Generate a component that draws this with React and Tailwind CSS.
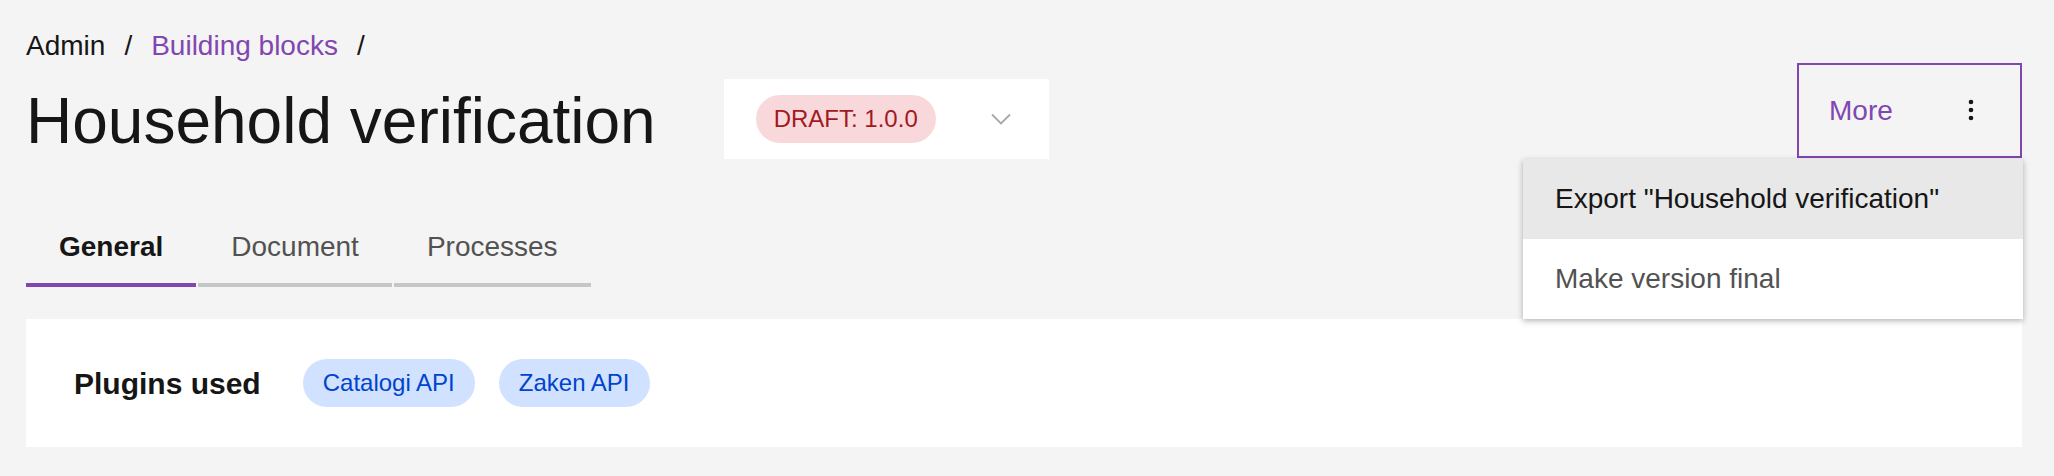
import { useState } from 'react';

const tabs = ['General', 'Document', 'Processes'];
const plugins = ['Catalogi API', 'Zaken API'];

function Chevron() {
  return (
    <svg width="20" height="12" viewBox="0 0 20 12" fill="none">
      <path d="M1 1.5l9 9 9-9" stroke="#a8a8a8" strokeWidth="1.8" />
    </svg>
  );
}

function Dots() {
  return (
    <svg width="8" height="24" viewBox="0 0 8 24" fill="#161616">
      <circle cx="4" cy="3" r="2.3" />
      <circle cx="4" cy="11" r="2.3" />
      <circle cx="4" cy="19" r="2.3" />
    </svg>
  );
}

export default function App() {
  const [active, setActive] = useState('General');

  return (
    <div
      className="min-h-[476px] bg-[#f4f4f4] pl-[26px] pr-[32px] text-[#161616]"
      style={{ fontFamily: '"Liberation Sans", Arial, sans-serif' }}
    >
      <div className="flex justify-between">
        <div>
          <nav className="pt-[26px] h-[66px] flex items-center text-[28px] leading-[40px]">
            <span>Admin</span>
            <span className="mx-[19px]">/</span>
            <a className="text-[#8146b0]">Building blocks</a>
            <span className="mx-[19px]">/</span>
          </nav>
          <div className="mt-[13px] flex items-start gap-[68px]">
            <h1 className="text-[64px] leading-[84px] font-normal whitespace-nowrap">Household verification</h1>
            <div className="w-[325px] h-[80px] bg-white flex items-center justify-between pl-[32px] pr-[38px]">
              <span className="h-[48px] px-[18px] rounded-full bg-[#f9d8db] text-[#a2191f] text-[24px] flex items-center">
                DRAFT: 1.0.0
              </span>
              <Chevron />
            </div>
          </div>
        </div>

        <div className="relative mt-[63px] self-start">
          <button className="w-[225px] h-[95px] border-2 border-[#8146b0] flex items-center justify-between pl-[30px] pr-[45px] text-[28px] text-[#8146b0]">
            <span>More</span>
            <Dots />
          </button>
          <div className="absolute right-[-1px] top-full mt-px w-[500px] bg-white shadow-[0_2px_6px_rgba(0,0,0,0.3)] z-10">
            <div className="h-[80px] px-[32px] flex items-center bg-[#e8e8e8] text-[28px] text-[#161616]">
              Export "Household verification"
            </div>
            <div className="h-[80px] px-[32px] flex items-center text-[28px] text-[#525252]">Make version final</div>
          </div>
        </div>
      </div>

      <div className="mt-[44px] flex gap-[2px]">
        {tabs.map((t) => (
          <button
            key={t}
            onClick={() => setActive(t)}
            className={`h-[80px] px-[33px] pt-[3px] border-b-4 text-[28px] leading-[40px] ${
              active === t ? 'border-[#8146b0] font-bold text-[#161616]' : 'border-[#c6c6c6] text-[#525252]'
            }`}
          >
            {t}
          </button>
        ))}
      </div>

      <div className="mt-[32px] h-[128px] bg-white flex items-center px-[48px]">
        <h2 className="text-[30px] font-bold mr-[42px]">Plugins used</h2>
        <div className="flex gap-[24px]">
          {plugins.map((p) => (
            <span
              key={p}
              className="h-[48px] px-[20px] rounded-full bg-[#d0e2ff] text-[#0043ce] text-[24px] flex items-center"
            >
              {p}
            </span>
          ))}
        </div>
      </div>
    </div>
  );
}
